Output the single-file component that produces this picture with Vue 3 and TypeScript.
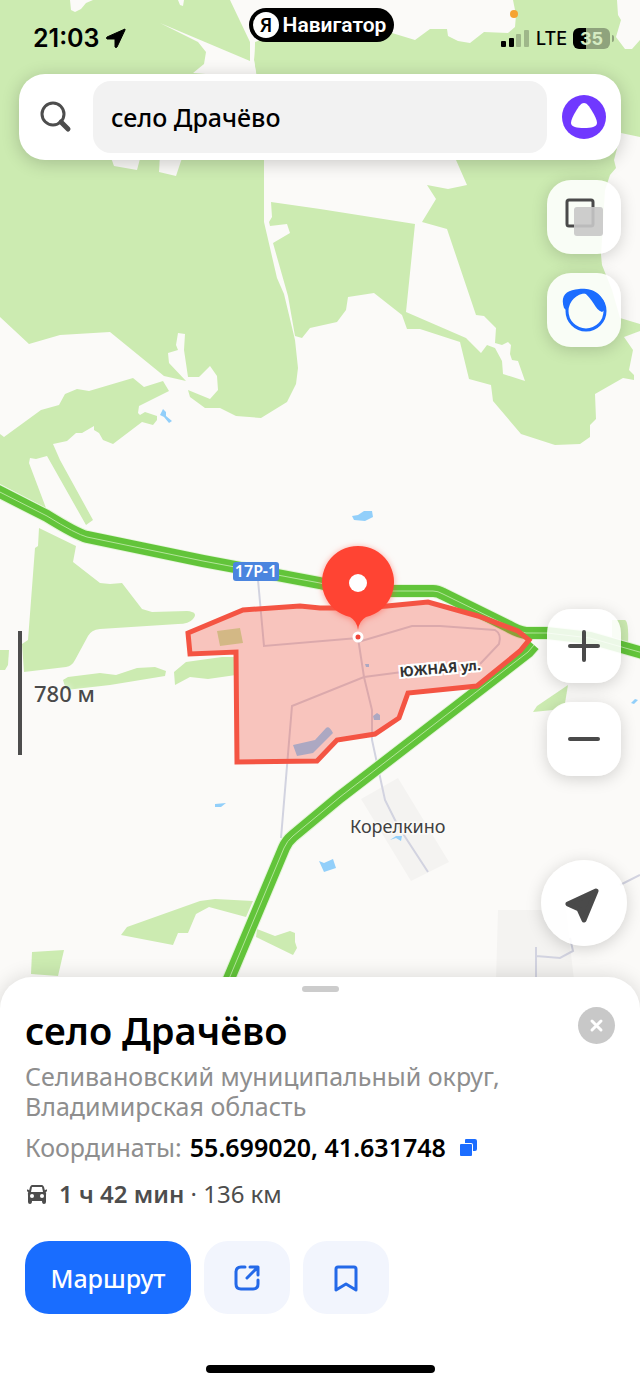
<script setup lang="ts">
import { ref } from 'vue'

const query = ref('село Драчёво')
const place = {
  name: 'село Драчёво',
  address: 'Селивановский муниципальный округ, Владимирская область',
  coordinates: '55.699020, 41.631748',
  duration: '1 ч 42 мин',
  distance: '136 км',
}

const forests: string[] = [
  'M0 0H230L250 42V61L256 74L264 130V222L277 278L284 294L295 340L298 368L296 384L287 402L261 418L236 416L220 408H205L190 397L188 390L210 399L218 390L217 376L210 366L199 377H188L184 350L185 334L178 333L176 345L178 350L168 353L169 363L186 381L164 376L110 332L60 335L29 344L0 317Z',
  'M255 42L300 26L392 33L415 40L430 29H447L448 36L458 41L470 43L484 32L508 33L515 27L516 15L513 0H617L618 15L621 20L616 37L625 49H632L640 40V137L621 133L614 160L616 168L610 175L605 190L601 255L602 265L612 290L620 318L640 324V331L624 337L633 350L629 370L634 375V380L623 378L595 394L596 419L590 425V437L580 444L555 445L521 434L493 401L491 385L469 379L460 342L420 329H407L402 315L374 293L348 297L346 310L337 322L310 328L302 338L295 336L288 296L273 243L290 233L287 224L270 226L269 222L272 217L271 202L320 209L415 224L406 312L466 338L481 353L487 345L495 348L502 361L503 374L525 381L518 361L512 360L510 354L511 345L508 342L502 345L495 343L496 328L484 316L476 315L447 229L422 222L436 199L427 185L448 189L467 185L456 160L440 120L264 130L256 74L254 60Z',
  'M0 434L4 437L41 410L59 405L65 394L77 389L89 391L133 378L144 387L163 381L169 391L139 406L138 413L140 415L145 412L157 416V420L153 425L142 422L113 444L103 440L99 433L94 430V426L82 433H76L67 441L53 444L60 460L93 520L86 525L47 456L36 459L30 458L29 463L46 508L0 484Z',
  'M39 528L76 546L73 562L100 583L110 584L122 583L142 609L152 612L187 611Q199 612 193 619Q189 624 178 624L100 629Q91 630 88 636L75 660Q72 666 66 667L24 672L22 644L28 640L35 548L38 546Z',
  'M0 650H9L8 665L5 670H0Z',
  'M63 680L68 677L100 673L116 675L137 668L155 667L166 671L165 676L110 685L66 690Z',
  'M174 672L186 662L222 657H236V675L208 679L190 677L175 685Z',
  'M121 935L127 927L200 901L215 899L253 901L246 917L209 907L196 914L188 933H178L173 945Z',
  'M257 929L275 936L290 931L295 933V942L297 948L293 955L256 937Z',
  'M32 952L64 950L58 976L31 974Z',
  'M533 712L537 706L568 685L565 703L553 710Z',
  'M612 620H625Q629 622 628 644H612Z',
]

const glades: string[] = [
  'M70 0L71 10L75 12L81 9L86 3L93 0Z',
  'M178 0L180 5L183 6L184 0Z',
  'M160 23L250 61V42H255L254 60L257 78L193 73L204 64L206 52L198 42Z',
  'M110 155L114 166L137 170L141 155Z',
  'M160 155L159 172L176 176L183 155Z',
]

const ponds: string[] = [
  'M160 415L163 409L166 412V416L172 421L169 423L164 417Z',
  'M352 516L358 515L364 511L372 511L373 517L365 521L354 520Z',
  'M215 804L226 803L221 807H215Z',
  'M319 861L324 863L333 859L336 868L324 872Z',
  'M390 840L396 836H402L401 841L396 838Z',
  'M631 703L635 699L638 700L634 704Z',
]

const streets: string[] = [
  'M258 580L264 646L358 638',
  'M358 642L412 626L440 626L495 630Q502 634 499 644L480 664',
  'M358 638L364 677L372 710V740L385 800L398 826L428 872',
  'M410 671L364 677L292 706L281 838',
  'M536 947V980M536 956L560 958L573 951L570 938M620 885L640 875',
]

const highways: string[] = [
  'M-8 488L47 516Q76 534 87 537L203 561L320 583L350 591H433Q438 591 443 594L508 626Q518 632 526 633H547L590 638L650 655',
  'M534 645L528 652L340 797L293 836Q287 841 284 848L226 986',
]
</script>

<template>
  <div class="app">
    <svg class="map" viewBox="0 0 640 1386" preserveAspectRatio="xMidYMin slice" aria-hidden="true">
      <rect width="640" height="1386" fill="#fbfaf8" />
      <path v-for="d in forests" :key="d" :d="d" fill="#ccebb1" />
      <path v-for="d in glades" :key="d" :d="d" fill="#fbfaf8" />
      <path d="M361 799L398 778L449 862L411 881ZM498 910H566L574 980H496Z" fill="#f4f3f1" />
      <path v-for="d in ponds" :key="d" :d="d" fill="#92cffa" />
      <path d="M217 631L240 628L243 643L220 646Z" fill="#c6e9a8" />
      <path d="M293 745L315 740L326 728Q329 725 333 733L313 753L297 756ZM373 716L377 713L380 715V720H374ZM365 664H369V667H366Z" fill="#8fd1ff" />
      <path v-for="d in streets" :key="d" :d="d" class="street" />
      <path v-for="d in highways" :key="d" :d="d" class="highway-edge" />
      <path v-for="d in highways" :key="d" :d="d" class="highway" />
      <path v-for="d in highways" :key="d" :d="d" class="highway-axis" />
      <path class="boundary" d="M188 633L243 610L300 606L320 608H360L387 606L428 602L478 616L518 631L529 640L520 651L477 686L408 693L399 718L375 734L337 740L317 761L237 762L236 652L190 654Z" />

      <rect x="233" y="562" width="46" height="19" rx="3" fill="#4b85df" />
      <text class="shield" x="256" y="577">17Р-1</text>
      <text class="street-name" x="400" y="677" transform="rotate(-5 400 677)">ЮЖНАЯ ул.</text>
      <text class="village" x="350" y="833">Корелкино</text>

      <g class="pin">
        <path d="M358 630Q357 621 350 617A36 36 0 1 1 366 617Q359 621 358 630Z" fill="#ff4433" />
        <circle cx="358" cy="583" r="9" fill="#fff" />
      </g>
      <circle cx="358" cy="637" r="4" fill="#f04438" stroke="#fff" stroke-width="3" />
    </svg>

    <header class="status">
      <div class="clock">
        <span>21:03</span>
        <svg width="20" height="20" viewBox="0 0 20 20" aria-hidden="true"><path d="M19 1L1 9Q0 10 1 11H9V19Q10 20 11 19L19 2Z" stroke="#000" stroke-linejoin="round" /></svg>
      </div>
      <div class="island">
        <svg width="26" height="26" viewBox="0 0 26 26" aria-hidden="true">
          <circle cx="13" cy="13" r="13" fill="#fff" />
          <text x="13" y="20" class="island-letter">Я</text>
        </svg>
        <span>Навигатор</span>
      </div>
      <div class="signals">
        <i class="recording"></i>
        <svg width="29" height="18" viewBox="0 0 29 18" aria-hidden="true">
          <rect y="12" width="5" height="6" rx="1" />
          <rect x="8" y="9" width="5" height="9" rx="1" />
          <rect x="15" y="5" width="5" height="13" rx="1" opacity=".22" />
          <rect x="23" y="1" width="5" height="17" rx="1" opacity=".22" />
        </svg>
        <span>LTE</span>
        <div class="battery">35</div>
      </div>
    </header>

    <form class="search" role="search" @submit.prevent>
      <button class="search-icon" type="submit" aria-label="Найти">
        <svg width="34" height="34" viewBox="0 0 34 34" fill="none" stroke="#4d4d4d" stroke-linecap="round">
          <circle cx="14" cy="14" r="11" stroke-width="3" />
          <path d="M22 22L29 29" stroke-width="5" />
        </svg>
      </button>
      <input v-model="query" type="text" aria-label="Поиск мест" />
      <button class="assistant" type="button" aria-label="Алиса">
        <svg width="44" height="44" viewBox="0 0 44 44">
          <circle cx="22" cy="22" r="22" fill="#7038ff" />
          <path d="M22 8C25 8 27 11 30 16C33 21 35 25 35 28C35 32 29 33 22 33S9 32 9 28C9 25 11 21 14 16C17 11 19 8 22 8Z" fill="#fff" />
        </svg>
      </button>
    </form>

    <main class="stage">
      <div class="scale"><i></i><span>780 м</span></div>
      <div class="controls">
        <div class="group">
          <button class="control" type="button" aria-label="Слои карты">
            <svg width="40" height="40" viewBox="0 0 40 40">
              <rect x="3" y="3" width="26" height="26" rx="2" fill="none" stroke="#4a4a4a" stroke-width="3" />
              <rect x="10" y="10" width="29" height="29" rx="3" fill="#c8c8c8" opacity=".9" />
            </svg>
          </button>
          <button class="control" type="button" aria-label="Обзор">
            <svg width="46" height="46" viewBox="0 0 46 46">
              <path d="M3 21C-1 9 5 3 18 2C30 1 42 5 45 22L41 25C34 23 32 11 22 5C13 6 7 13 5 23Z" fill="#1c6dff" />
              <circle cx="25" cy="24" r="19" fill="none" stroke="#1c6dff" stroke-width="3" />
            </svg>
          </button>
        </div>
        <div class="group zoom">
          <button class="control" type="button" aria-label="Приблизить">
            <svg width="32" height="32" viewBox="0 0 32 32"><path d="M16 2V30M2 16H30" class="sign" /></svg>
          </button>
          <button class="control" type="button" aria-label="Отдалить">
            <svg width="32" height="32" viewBox="0 0 32 32"><path d="M2 16H30" class="sign" /></svg>
          </button>
        </div>
        <button class="control locate" type="button" aria-label="Моё местоположение">
          <svg width="40" height="40" viewBox="0 0 40 40"><path d="M32 8L4 21L15 26L20 37Z" fill="#4a4a4a" stroke="#4a4a4a" stroke-width="5" stroke-linejoin="round" /></svg>
        </button>
      </div>
    </main>

    <section class="sheet">
      <i class="handle"></i>
      <div class="heading">
        <h1>{{ place.name }}</h1>
        <button class="close" type="button" aria-label="Закрыть">
          <svg width="37" height="37" viewBox="0 0 37 37"><path d="M14 14L23 23M23 14L14 23" stroke="#fff" stroke-width="3" stroke-linecap="round" /></svg>
        </button>
      </div>
      <p class="address">{{ place.address }}</p>
      <p class="coordinates">
        <span>Координаты: </span><b>{{ place.coordinates }}</b>
        <button class="copy" type="button" aria-label="Скопировать координаты">
          <svg width="17" height="17" viewBox="0 0 17 17" fill="#1c6dff">
            <path d="M6 0H15Q17 0 17 2V10Q17 12 15 12H13V6Q13 4 11 4H5V1Q5 0 6 0Z" />
            <rect y="5" width="12" height="12" rx="1" />
          </svg>
        </button>
      </p>
      <p class="trip">
        <svg width="20" height="20" viewBox="0 0 20 20" aria-hidden="true">
          <path d="M5 1H15Q16 1 17 3L18 7Q20 9 19 12V18Q19 20 17 20Q15 20 15 17H5Q5 20 3 20Q1 20 1 18V12Q0 9 2 7L3 3Q4 1 5 1Z" fill="#4d4d4d" />
          <path d="M5 3H15L16 8H4Z" fill="#fff" />
          <circle cx="5" cy="12" r="2" fill="#fff" /><circle cx="15" cy="12" r="2" fill="#fff" />
          <path d="M0 6L3 8M20 6L17 8" stroke="#4d4d4d" stroke-width="2" />
        </svg>
        <span><b>{{ place.duration }}</b> · {{ place.distance }}</span>
      </p>
      <div class="actions">
        <button class="route" type="button">Маршрут</button>
        <button class="action" type="button" aria-label="Поделиться">
          <svg width="28" height="28" viewBox="0 0 28 28" class="line-icon">
            <path d="M12 3H8Q3 3 3 8V20Q3 25 8 25H20Q25 25 25 20V16M14 14L24 4M17 3H25V11" />
          </svg>
        </button>
        <button class="action" type="button" aria-label="Сохранить">
          <svg width="28" height="28" viewBox="0 0 28 28" class="line-icon">
            <path d="M6 3H22Q24 3 24 5V26L14 20L4 26V5Q4 3 6 3Z" />
          </svg>
        </button>
      </div>
      <i class="home"></i>
    </section>
  </div>
</template>

<style>
body {
  margin: 0;
}
</style>

<style scoped>
.app {
  position: relative;
  display: flex;
  flex-direction: column;
  min-height: 100vh;
  overflow: hidden;
  background: #fbfaf8;
  color: #000;
  font-family: "Noto Sans", "Liberation Sans", sans-serif;
}
.app * {
  box-sizing: border-box;
}
button {
  display: grid;
  place-items: center;
  padding: 0;
  border: 0;
  background: none;
  color: inherit;
  font: inherit;
  cursor: pointer;
}
svg {
  display: block;
}
i {
  display: block;
}
.map {
  position: absolute;
  inset: 0;
  width: 100%;
  height: 100%;
}
.street {
  fill: none;
  stroke: #d2d3e0;
  stroke-width: 2;
}
.highway-edge,
.highway,
.highway-axis {
  fill: none;
  stroke: #e4f5d9;
  stroke-width: 14;
}
.highway {
  stroke: #62c43a;
  stroke-width: 12;
}
.highway-axis {
  stroke: #b3e59a;
  stroke-width: 1;
}
.boundary {
  fill: rgba(242, 72, 52, 0.3);
  stroke: #f45443;
  stroke-width: 5;
}
.shield {
  fill: #fff;
  font-size: 16px;
  font-weight: 600;
  text-anchor: middle;
}
.street-name {
  fill: #333;
  stroke: #fff;
  stroke-width: 4;
  paint-order: stroke;
  font-size: 14px;
  font-weight: 700;
}
.village {
  fill: #404040;
  stroke: #fbfaf8;
  stroke-width: 3;
  paint-order: stroke;
  font-size: 18px;
}
.pin {
  filter: drop-shadow(0 1px 3px rgba(255, 68, 51, 0.5));
}
.status {
  position: relative;
  display: grid;
  grid-template-columns: 1fr auto 1fr;
  height: 74px;
  padding: 0 30px 0 33px;
  font-family: Inter, "Noto Sans", sans-serif;
}
.clock {
  display: flex;
  align-items: center;
  gap: 6px;
  height: 76px;
  font-size: 25px;
  font-weight: 600;
}
.island {
  display: flex;
  align-items: center;
  gap: 4px;
  height: 34px;
  margin-top: 8px;
  padding: 0 8px 0 4px;
  border-radius: 17px;
  background: #000;
  color: #fff;
  font-family: Roboto, "Noto Sans", sans-serif;
  font-size: 21px;
  font-weight: 600;
}
.island-letter {
  font-family: "Noto Sans", sans-serif;
  font-size: 19px;
  font-weight: 600;
  text-anchor: middle;
}
.signals {
  position: relative;
  display: flex;
  align-items: center;
  justify-content: flex-end;
  gap: 6px;
  height: 76px;
  font-size: 18px;
  font-weight: 500;
}
.recording {
  position: absolute;
  top: 10px;
  right: 92px;
  width: 8px;
  height: 8px;
  border-radius: 50%;
  background: #f5a432;
}
.battery {
  position: relative;
  width: 37px;
  border-radius: 6px;
  background: linear-gradient(90deg, #000 35%, #8fa37d 35%);
  color: #d5ebc2;
  font-size: 18px;
  font-weight: 700;
  line-height: 21px;
  text-align: center;
}
.battery::after {
  position: absolute;
  top: 7px;
  right: -4px;
  width: 2px;
  height: 7px;
  border-radius: 0 2px 2px 0;
  background: #8fa37d;
  content: "";
}
.search {
  position: relative;
  display: flex;
  align-items: stretch;
  height: 86px;
  margin: 0 19px;
  padding: 7px 0;
  border-radius: 26px;
  background: #fff;
  box-shadow: 0 3px 18px rgba(0, 0, 0, 0.2);
}
.search-icon,
.assistant {
  flex: none;
  width: 74px;
}
.search input {
  flex: 1;
  min-width: 0;
  padding: 0 18px;
  border: 0;
  border-radius: 18px;
  outline: none;
  background: #f2f2f2;
  color: #000;
  font: 500 25px "Noto Sans", "Liberation Sans", sans-serif;
}
.stage {
  position: relative;
  display: flex;
  flex: 1;
  justify-content: space-between;
  padding: 20px 13px 31px 18px;
}
.scale {
  display: flex;
  align-items: center;
  align-self: flex-end;
  gap: 12px;
  margin-bottom: 191px;
  color: #4a4a4a;
  font-size: 22px;
  font-weight: 500;
  text-shadow: 0 0 6px #fff;
}
.scale i {
  width: 4px;
  height: 124px;
  background: #4d4d4d;
}
.controls {
  display: flex;
  flex-direction: column;
  align-items: center;
}
.group {
  display: grid;
  gap: 19px;
}
.zoom {
  margin: auto 0 84px;
}
.control {
  width: 74px;
  height: 74px;
  border-radius: 24px;
  background: rgba(255, 255, 255, 0.88);
  box-shadow: 0 3px 16px rgba(0, 0, 0, 0.17);
}
.locate {
  width: 86px;
  height: 86px;
  border-radius: 50%;
}
.sign {
  stroke: #4a4a4a;
  stroke-width: 4;
  stroke-linecap: round;
}
.sheet {
  position: relative;
  padding: 9px 25px 13px;
  border-radius: 32px 32px 0 0;
  background: #fff;
  box-shadow: 0 0 20px rgba(0, 0, 0, 0.14);
}
.handle {
  width: 37px;
  height: 6px;
  margin: 0 auto;
  border-radius: 3px;
  background: #ccc;
}
.heading {
  display: flex;
  justify-content: space-between;
  margin-top: 12px;
}
h1 {
  margin: 0;
  font-size: 38px;
  font-weight: 600;
  line-height: 52px;
}
.close {
  width: 37px;
  height: 37px;
  margin-top: 3px;
  border-radius: 50%;
  background: #c8c8c8;
}
p {
  margin: 0;
  font-size: 25px;
  line-height: 30px;
}
b {
  font-weight: 600;
}
.address {
  max-width: 520px;
  margin-top: 5px;
  color: #8e8e8e;
}
.coordinates {
  display: flex;
  align-items: center;
  gap: 8px;
  margin-top: 11px;
  color: #8e8e8e;
}
.coordinates b {
  color: #000;
}
.copy {
  margin-left: 6px;
}
.trip {
  display: flex;
  align-items: center;
  gap: 12px;
  margin-top: 17px;
  padding-left: 2px;
  color: #4d4d4d;
  font-size: 24px;
}
.actions {
  display: flex;
  gap: 13px;
  margin-top: 32px;
}
.route,
.action {
  height: 73px;
  border-radius: 24px;
}
.route {
  width: 166px;
  background: #196dff;
  color: #fff;
  font-size: 25px;
  font-weight: 500;
}
.action {
  width: 86px;
  background: #f2f5fd;
}
.line-icon {
  fill: none;
  stroke: #2469e8;
  stroke-width: 3;
  stroke-linecap: round;
  stroke-linejoin: round;
}
.home {
  width: 229px;
  height: 8px;
  margin: 51px auto 0;
  border-radius: 4px;
  background: #000;
}
</style>
